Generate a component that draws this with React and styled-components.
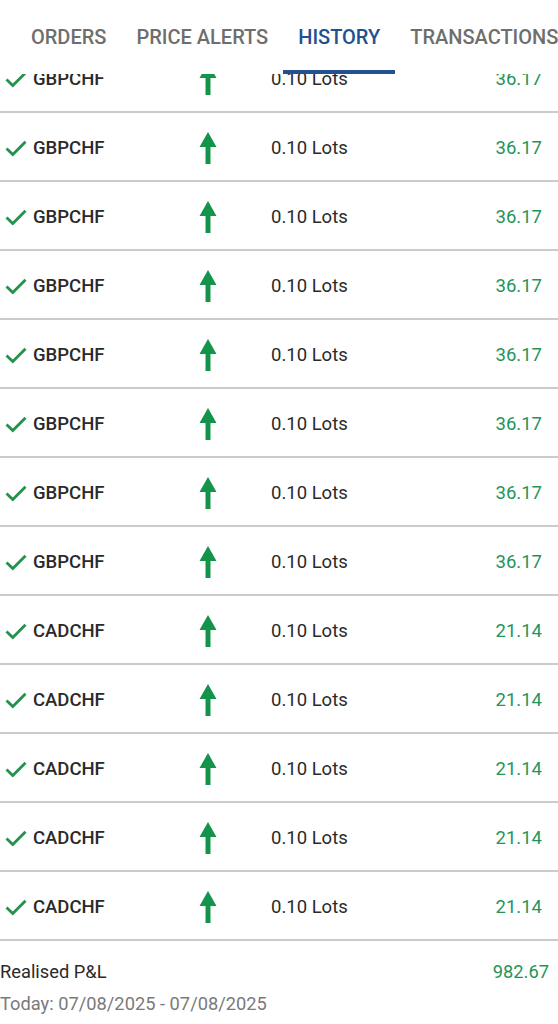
import React from "react";
import styled, { createGlobalStyle } from "styled-components";

const Global = createGlobalStyle`
  html, body { margin: 0; padding: 0; background: #fff; }
  body { font-family: Roboto, "Noto Sans", "Liberation Sans", sans-serif; -webkit-font-smoothing: antialiased; }
`;

const Screen = styled.div`
  width: 558px;
  height: 1024px;
  overflow: hidden;
  display: flex;
  flex-direction: column;
  background: #fff;
`;

const TabBar = styled.div`
  height: 74px;
  flex: none;
  display: flex;
  padding-left: 16px;
  white-space: nowrap;
  overflow: hidden;
  background: #fff;
`;

const Tab = styled.div`
  position: relative;
  flex: none;
  padding: 24px 15px 0;
  height: 74px;
  display: flex;
  align-items: flex-start;
  box-sizing: border-box;
  font-size: 20px;
  font-weight: 500;
  line-height: 26px;
  color: ${(p) => (p.$active ? "#23508f" : "#6e6e6e")};
  &::after {
    content: "";
    display: ${(p) => (p.$active ? "block" : "none")};
    position: absolute;
    left: 0;
    right: 0;
    bottom: 0;
    height: 4px;
    background: #23508f;
  }
`;

const Viewport = styled.div`
  flex: 1;
  overflow: hidden;
  display: flex;
  flex-direction: column;
`;

const List = styled.div`
  margin-top: -30px;
  display: flex;
  flex-direction: column;
`;

const Row = styled.div`
  height: 64px;
  box-sizing: content-box;
  border-bottom: 2px solid #cbcbcb;
  display: grid;
  grid-template-columns: 28px 166px 72px 1fr auto;
  align-items: center;
  padding: 3px 16px 0 5px;
  font-size: 18.5px;
  color: #222;
`;

const Symbol = styled.span`
  font-weight: 500;
  color: #2a2a2a;
`;

const Lots = styled.span`
  color: #2a2a2a;
`;

const Amount = styled.span`
  color: #1f955a;
  text-align: right;
`;

const Footer = styled.div`
  padding: 20px 9px 0 0;
  display: grid;
  grid-template-columns: 1fr auto;
  row-gap: 10px;
  font-size: 18.3px;
  line-height: 22px;
`;

const Label = styled.span`
  color: #2a2a2a;
`;

const FooterAmount = styled.span`
  color: #1f955a;
`;

const DateRange = styled.span`
  grid-column: 1 / -1;
  color: #7a7a7a;
`;

const Check = () => (
  <svg width="22" height="17" viewBox="0 0 22 17">
    <path d="M1.5 8.5 L7.8 14.6 L20.5 1.8" fill="none" stroke="#23924b" strokeWidth="2.8" />
  </svg>
);

const Arrow = () => (
  <svg width="18" height="33" viewBox="0 0 18 33">
    <path d="M9 0 L17.5 15 L11.5 15 L11.5 32 L6.5 32 L6.5 15 L0.5 15 Z" fill="#14934a" />
  </svg>
);

const rows = [
  ...Array(8).fill({ s: "GBPCHF", a: "36.17" }),
  ...Array(5).fill({ s: "CADCHF", a: "21.14" }),
];

export default function App() {
  return (
    <>
      <Global />
      <Screen>
        <TabBar>
          <Tab>ORDERS</Tab>
          <Tab>PRICE ALERTS</Tab>
          <Tab $active>HISTORY</Tab>
          <Tab>TRANSACTIONS</Tab>
        </TabBar>
        <Viewport>
          <List>
            {rows.map((r, i) => (
              <Row key={i}>
                <Check />
                <Symbol>{r.s}</Symbol>
                <Arrow />
                <Lots>0.10 Lots</Lots>
                <Amount>{r.a}</Amount>
              </Row>
            ))}
          </List>
          <Footer>
            <Label>Realised P&amp;L</Label>
            <FooterAmount>982.67</FooterAmount>
            <DateRange>Today: 07/08/2025 - 07/08/2025</DateRange>
          </Footer>
        </Viewport>
      </Screen>
    </>
  );
}
